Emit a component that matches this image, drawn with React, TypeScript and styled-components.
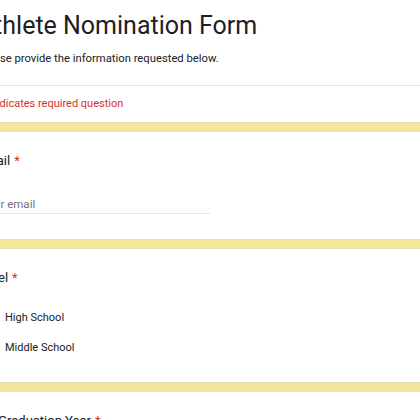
import React from 'react';
import styled, { createGlobalStyle } from 'styled-components';

const GlobalStyle = createGlobalStyle`
  html, body {
    margin: 0;
    padding: 0;
    overflow: hidden;
    background: #f2e79c;
  }
  body {
    font-family: Roboto, "Liberation Sans", Arial, sans-serif;
    color: #202124;
  }
`;

const Page = styled.main`
  display: flex;
  flex-direction: column;
  gap: 10px;
  width: 520px;
  margin-left: -46px;
`;

const Card = styled.section<{ $pt?: number; $pb?: number }>`
  background: #fff;
  box-shadow: 0 0 0 1px #e8e0b0;
  padding: ${p => p.$pt ?? 20}px 24px ${p => p.$pb ?? 20}px;
`;

const Title = styled.h1`
  margin: 0;
  font-size: 25px;
  line-height: 30px;
  font-weight: 400;
  color: #202124;
`;

const Subtitle = styled.p`
  margin: 10px 0 0;
  font-size: 11.25px;
  line-height: 16px;
  color: #202124;
`;

const Divider = styled.hr`
  border: 0;
  height: 1px;
  background: #e3e3e3;
  margin: 18px -24px 10px;
`;

const RequiredNote = styled.div`
  padding-left: 5px;
  font-size: 11px;
  line-height: 16px;
  color: #d93025;
`;

const Label = styled.div`
  font-size: 13px;
  line-height: 18px;
  color: #202124;
`;

const Star = styled.span`
  color: #d93025;
  margin-left: 4px;
`;

const TextInput = styled.input`
  display: block;
  width: 232px;
  box-sizing: border-box;
  margin-top: 25px;
  padding: 0 0 0 3px;
  height: 19px;
  border: 0;
  border-bottom: 1px solid #e6e6e6;
  outline: none;
  background: transparent;
  font-family: inherit;
  font-size: 11.5px;
  line-height: 16px;
  color: #202124;
  &::placeholder {
    color: #70757a;
  }
`;

const Options = styled.div`
  display: flex;
  flex-direction: column;
  margin-top: 16px;
`;

const Option = styled.label`
  display: flex;
  align-items: center;
  gap: 9px;
  height: 30px;
  font-size: 11px;
  line-height: 16px;
  color: #202124;
`;

const Radio = styled.span`
  width: 14px;
  height: 14px;
  border-radius: 50%;
  border: 2px solid #5f6368;
  flex: none;
`;

const levels = ['High School', 'Middle School'];

export default function App() {
  return (
    <>
      <GlobalStyle />
      <Page>
        <Card $pt={11} $pb={10}>
          <Title>Athlete Nomination Form</Title>
          <Subtitle>Please provide the information requested below.</Subtitle>
          <Divider />
          <RequiredNote>* Indicates required question</RequiredNote>
        </Card>
        <Card $pb={25}>
          <Label>
            Email<Star>*</Star>
          </Label>
          <TextInput type="email" placeholder="Your email" />
        </Card>
        <Card $pb={19}>
          <Label>
            Level<Star>*</Star>
          </Label>
          <Options>
            {levels.map(l => (
              <Option key={l}>
                <Radio />
                {l}
              </Option>
            ))}
          </Options>
        </Card>
        <Card>
          <Label>
            HS Graduation Year<Star>*</Star>
          </Label>
        </Card>
      </Page>
    </>
  );
}
